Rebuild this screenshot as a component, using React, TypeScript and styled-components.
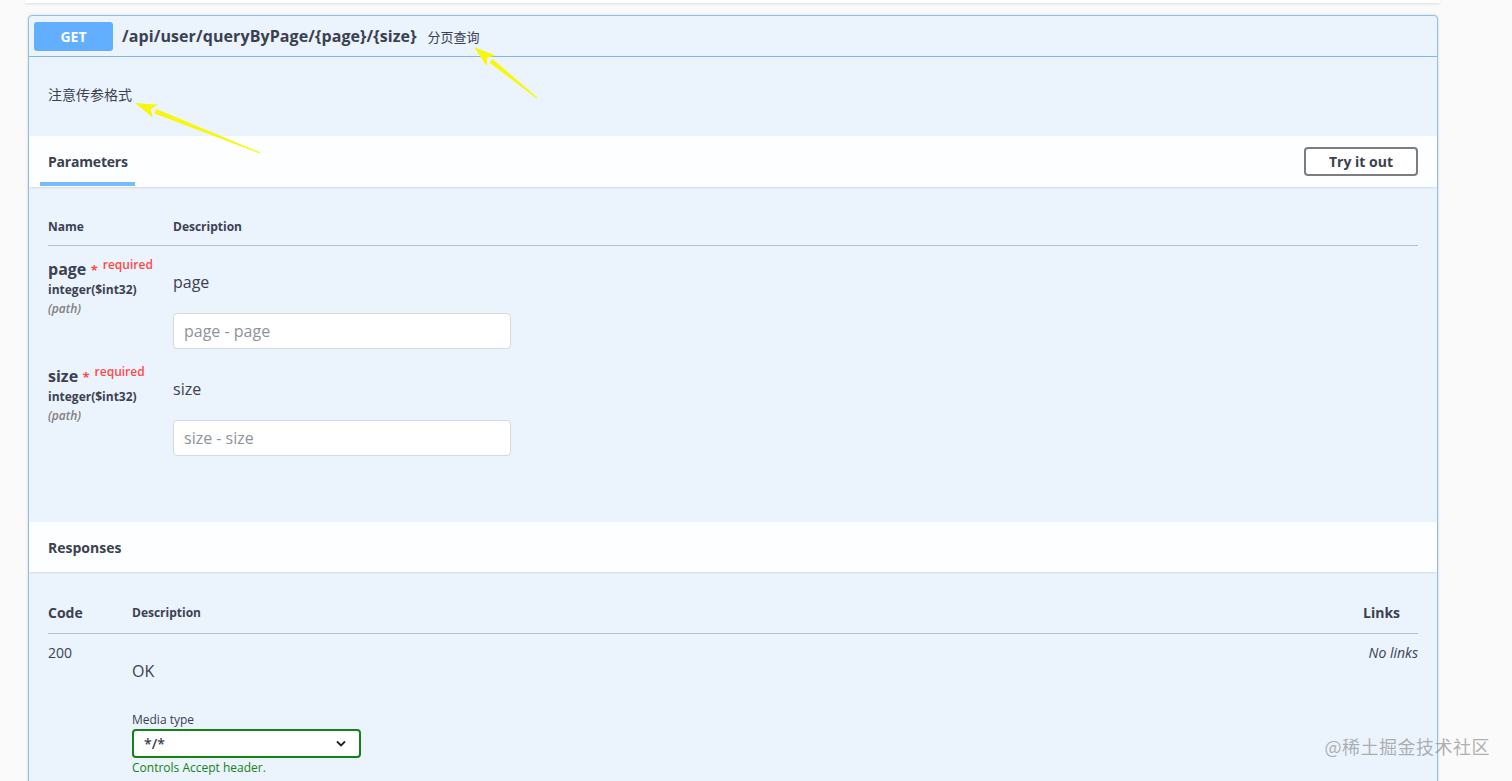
import React from "react";
import styled, { createGlobalStyle } from "styled-components";

const GlobalStyle = createGlobalStyle`
  html, body {
    margin: 0;
    padding: 0;
    background: #fafafa;
  }
  body {
    font-family: "Open Sans", "Noto Sans CJK SC", sans-serif;
    color: #3b4151;
    overflow: hidden;
  }
`;

const Page = styled.div`
  position: relative;
  width: 1512px;
  height: 781px;
  overflow: hidden;
  padding: 0 74px 0 28px;
  box-sizing: border-box;
`;

const PrevBlock = styled.div`
  height: 3px;
  margin: 0 -2px 0 -3px;
  background: #fff;
  box-shadow: 0 1px 3px rgba(0, 0, 0, 0.12);
`;

const OpBlock = styled.div`
  margin-top: 12px;
  border: 1px solid #8ebff0;
  border-radius: 4px;
  background: #ebf3fd;
  box-shadow: 0 0 3px rgba(0, 0, 0, 0.15);
`;

const OpHeader = styled.div`
  display: flex;
  align-items: center;
  height: 41px;
  padding: 0 5px;
  border-bottom: 1px solid #7fb6ec;
  box-sizing: border-box;
`;

const Method = styled.span`
  display: inline-flex;
  align-items: center;
  justify-content: center;
  width: 79px;
  height: 29px;
  border-radius: 3px;
  background: #61affe;
  color: #fff;
  font-size: 14px;
  font-weight: 700;
`;

const Path = styled.span`
  margin-left: 9px;
  font-size: 16px;
  font-weight: 700;
  color: #3b4151;
  letter-spacing: 0.1px;
`;

const Summary = styled.span`
  margin-left: 11px;
  font-size: 13px;
  color: #3b4151;
`;

const Description = styled.div`
  height: 79px;
  padding: 0 19px 6px;
  box-sizing: border-box;
  display: flex;
  align-items: center;
  font-size: 14px;
  color: #3b4151;
`;

const SectionHeader = styled.div<{ $h: number }>`
  display: flex;
  align-items: center;
  justify-content: space-between;
  height: ${(p) => p.$h}px;
  padding: 0 19px 0 11px;
  background: rgba(255, 255, 255, 0.9);
  box-shadow: 0 1px 2px rgba(0, 0, 0, 0.1);
  box-sizing: border-box;
`;

const Tab = styled.div`
  align-self: stretch;
  display: flex;
  align-items: center;
  padding: 0 7px 0 8px;
  font-size: 14px;
  font-weight: 700;
  letter-spacing: -0.2px;
  position: relative;
  &::after {
    content: "";
    position: absolute;
    left: 0;
    right: 0;
    bottom: 1px;
    height: 4px;
    background: #61affe;
    opacity: 0.85;
  }
`;

const PlainTitle = styled.div`
  padding-left: 8px;
  font-size: 14px;
  font-weight: 700;
`;

const TryButton = styled.button`
  width: 114px;
  height: 29px;
  border: 2px solid #7d7d7d;
  border-radius: 4px;
  background: #fff;
  font-family: inherit;
  font-size: 14px;
  font-weight: 700;
  color: #3b4151;
`;

const ParamsBody = styled.div`
  padding: 20px 19px 62px;
`;

const HeadRow = styled.div<{ $cols: string; $h: number }>`
  display: grid;
  grid-template-columns: ${(p) => p.$cols};
  align-items: center;
  height: ${(p) => p.$h}px;
  border-bottom: 1px solid #b6c0cb;
  font-size: 12px;
  font-weight: 700;
`;

const ParamRow = styled.div`
  display: grid;
  grid-template-columns: 125px 1fr;
  padding-top: 10px;
  height: 97px;
  box-sizing: content-box;
`;

const ParamName = styled.div`
  font-size: 16px;
  font-weight: 700;
  line-height: 18px;
`;

const Required = styled.span`
  color: #ff4949;
  font-size: 13px;
  margin-left: 1px;
  & sup {
    font-size: 12px;
    vertical-align: 6px;
    margin-left: 5px;
    font-weight: 600;
  }
`;

const ParamType = styled.div`
  font-size: 12px;
  font-weight: 700;
  margin-top: 2px;
  line-height: 18px;
`;

const ParamIn = styled.div`
  font-size: 12px;
  font-style: italic;
  font-weight: 600;
  color: #808080;
  line-height: 20px;
`;

const ParamDesc = styled.div`
  font-size: 16px;
  padding-top: 15px;
  line-height: 22px;
`;

const TextInput = styled.input`
  display: block;
  margin-top: 20px;
  width: 338px;
  height: 36px;
  padding: 0 10px;
  box-sizing: border-box;
  border: 1px solid #d9d9d9;
  border-radius: 4px;
  background: #fff;
  font-family: inherit;
  font-size: 16px;
  color: #3b4151;
  &::placeholder {
    color: #8e939b;
  }
`;

const ResponsesBody = styled.div`
  padding: 20px 19px;
`;

const CodeHead = styled.span`
  font-size: 14px;
`;

const LinksHead = styled.span`
  font-size: 14px;
`;

const ResponseRow = styled.div`
  display: grid;
  grid-template-columns: 84px 1fr 55px;
  padding-top: 9px;
`;

const Code = styled.div`
  font-size: 14px;
`;

const RespDesc = styled.div`
  padding-top: 17px;
  font-size: 16px;
`;

const NoLinks = styled.div`
  font-size: 14px;
  font-style: italic;
  text-align: right;
  white-space: nowrap;
`;

const MediaLabel = styled.div`
  margin-top: 29px;
  font-size: 12px;
`;

const Select = styled.div`
  display: flex;
  align-items: center;
  justify-content: space-between;
  width: 229px;
  height: 29px;
  margin-top: 1px;
  padding: 0 13px 0 10px;
  box-sizing: border-box;
  border: 2px solid #148214;
  border-radius: 4px;
  background: #fff;
  font-size: 14px;
  font-weight: 600;
`;

const Hint = styled.div`
  margin-top: 2px;
  font-size: 12px;
  line-height: 16px;
  color: #148214;
`;

const Watermark = styled.div`
  position: absolute;
  right: 22px;
  bottom: 22px;
  font-size: 18px;
  color: rgba(150, 150, 150, 0.75);
  font-family: "Noto Sans CJK SC", sans-serif;
  letter-spacing: 0.5px;
`;

const Annotations = styled.svg`
  position: absolute;
  left: 0;
  top: 0;
  pointer-events: none;
`;

function Arrow({ x1, y1, x2, y2 }: { x1: number; y1: number; x2: number; y2: number }) {
  // tapered yellow arrow from tail (x1,y1) to head (x2,y2)
  const dx = x2 - x1;
  const dy = y2 - y1;
  const len = Math.hypot(dx, dy);
  const ux = dx / len;
  const uy = dy / len;
  const nx = -uy;
  const ny = ux;
  const headLen = 22;
  const bx = x2 - ux * headLen;
  const by = y2 - uy * headLen;
  const shaft = [
    [x1 + nx * 0.6, y1 + ny * 0.6],
    [bx + nx * 2.4, by + ny * 2.4],
    [bx - nx * 2.4, by - ny * 2.4],
    [x1 - nx * 0.6, y1 - ny * 0.6],
  ];
  const head = [
    [x2, y2],
    [bx + nx * 7, by + ny * 7],
    [bx + ux * 5, by + uy * 5],
    [bx - nx * 7, by - ny * 7],
  ];
  const pts = (a: number[][]) => a.map((p) => p.join(",")).join(" ");
  return (
    <g fill="#f7f70c">
      <polygon points={pts(shaft)} />
      <polygon points={pts(head)} />
    </g>
  );
}

export default function App() {
  return (
    <>
      <GlobalStyle />
      <Page>
        <PrevBlock />
        <OpBlock>
          <OpHeader>
            <Method>GET</Method>
            <Path>/api/user/queryByPage/{"{page}"}/{"{size}"}</Path>
            <Summary>分页查询</Summary>
          </OpHeader>

          <Description>注意传参格式</Description>

          <SectionHeader $h={51}>
            <Tab>Parameters</Tab>
            <TryButton>Try it out</TryButton>
          </SectionHeader>

          <ParamsBody>
            <HeadRow $cols="125px 1fr" $h={38}>
              <span>Name</span>
              <span>Description</span>
            </HeadRow>

            {["page", "size"].map((name) => (
              <ParamRow key={name}>
                <div>
                  <ParamName>
                    {name}
                    <Required>
                      {" "}*<sup>required</sup>
                    </Required>
                  </ParamName>
                  <ParamType>integer($int32)</ParamType>
                  <ParamIn>(path)</ParamIn>
                </div>
                <div>
                  <ParamDesc>{name}</ParamDesc>
                  <TextInput placeholder={`${name} - ${name}`} />
                </div>
              </ParamRow>
            ))}
          </ParamsBody>

          <SectionHeader $h={50}>
            <PlainTitle>Responses</PlainTitle>
          </SectionHeader>

          <ResponsesBody>
            <HeadRow $cols="84px 1fr 55px" $h={41}>
              <CodeHead>Code</CodeHead>
              <span>Description</span>
              <LinksHead>Links</LinksHead>
            </HeadRow>
            <ResponseRow>
              <Code>200</Code>
              <div>
                <RespDesc>OK</RespDesc>
                <MediaLabel>Media type</MediaLabel>
                <Select>
                  <span>*/*</span>
                  <svg width="10" height="7" viewBox="0 0 10 7">
                    <path d="M1 1.5l4 4 4-4" fill="none" stroke="#222" strokeWidth="1.8" />
                  </svg>
                </Select>
                <Hint>Controls Accept header.</Hint>
              </div>
              <NoLinks>No links</NoLinks>
            </ResponseRow>
          </ResponsesBody>
        </OpBlock>

        <Annotations width="1512" height="781">
          <Arrow x1={537} y1={98} x2={474} y2={47} />
          <Arrow x1={260} y1={153} x2={135} y2={103} />
        </Annotations>

        <Watermark>@稀土掘金技术社区</Watermark>
      </Page>
    </>
  );
}
